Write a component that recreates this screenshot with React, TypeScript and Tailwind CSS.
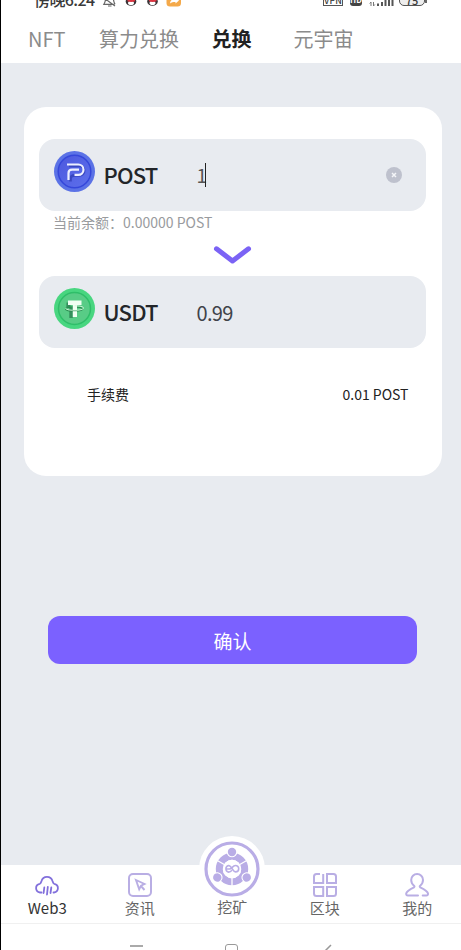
import React from "react";

function StatusBar() {
  return (
    <div className="flex h-[12px] shrink-0 items-start overflow-hidden bg-white text-[#3a3a3a]">
      <div className="ml-[33px] -mt-[11px] w-[67px] whitespace-nowrap text-[16px] font-medium leading-5 tracking-[-0.6px]">傍晚6:24</div>
      <svg className="h-[12px] w-[86px] shrink-0" viewBox="100 0 86 12" fill="none">
        <path d="M104.500 -1c0 2.200-.6 3.600-1.600 5.300h10.600M112.500 -1c0 2.200.5 3.600 1.500 5.300M107 6h3.500M103 -2l11 8" stroke="#666" strokeWidth="1.200" />
        {[130, 151.500].map((x) => (
          <g key={x}>
            <ellipse cx={x} cy="1.500" rx="5.300" ry="4.300" fill="#3a3437" />
            <ellipse cx={x} cy="3" rx="3" ry="2" fill="#fff" />
            <path d={`M${x - 3.500} -1h7.500v2.300q-4 1.200-7.500 0z`} fill="#dc3440" />
          </g>
        ))}
        <rect x="165.500" y="-8" width="14.500" height="14.500" rx="3.500" fill="#f4a94a" />
        <path d="M169 3.500c.5-3.500 2.500-4.500 5.500-4.500v-1.500l3.500 3-3.500 3v-1.500c-2.500 0-4 .3-5.500 1.500z" fill="#fff" />
      </svg>
      <div className="ml-[136px] -mt-[8px] h-[14px] w-[20px] border border-[#555] text-center text-[9px] font-medium leading-[15px]">VPN</div>
      <div className="ml-[7px] -mt-[7px] h-[13px] w-[12px] rounded-[3px] bg-[#444] text-center text-[8px] font-bold leading-[14px] text-white">HD</div>
      <svg className="ml-[7px] h-[8px] w-[26px] shrink-0" viewBox="0 0 26 8" fill="none">
        <path d="M2 2v4M0.700 3.500L2 2M4.500 2v4l1.300-1.500" stroke="#777" />
        <path d="M9 3.500v2.500M13 2v4M16.500 0v6M20 0v6M23.500 0v6" stroke="#555" strokeWidth="2" />
      </svg>
      <div className="ml-[4px] -mt-[8px] h-[14px] w-[26px] rounded-[5px] border-[1.500px] border-[#555] bg-[#eee] text-center text-[11px] font-medium leading-[14px]">75</div>
      <div className="h-[3px] w-[2px] bg-[#666]" />
    </div>
  );
}

function TopTabs() {
  return (
    <nav className="flex h-[51px] shrink-0 items-start whitespace-nowrap bg-white pt-[15px] text-[20px] leading-6 text-[#8b8b8b]">
      <span className="ml-[27px] w-[71px]">NFT</span>
      <span className="w-[112.500px]">算力兑换</span>
      <span className="w-[82px] font-bold text-[#222]">兑换</span>
      <span>元宇宙</span>
    </nav>
  );
}

function PostCoin() {
  return (
    <svg className="size-[41px]" viewBox="0 0 41 41" fill="none">
      <defs>
        <linearGradient id="postFace" x1="0" y1="0" x2="1" y2="1">
          <stop stopColor="#4c58de" />
          <stop offset="1" stopColor="#5d70ec" />
        </linearGradient>
      </defs>
      <circle cx="20.500" cy="20.500" r="20.500" fill="#5b72e6" />
      <circle cx="20.500" cy="20.500" r="16.300" fill="url(#postFace)" stroke="#3547da" strokeWidth="1.500" />
      <path d="M14 14H24.500a4.600 4.600 0 0 1 0 9.400H20q-4.500 0-4.500 3.600V29.500" stroke="#3947c0" strokeWidth="2.600" transform="translate(1 1)" />
      <path d="M13 13.500H24.300a5.200 5.200 0 0 1 0 10.400H20.500M25 18.700h-7q-3.500 0-3.500 3.500V29" stroke="#edf0ff" strokeWidth="2.200" />
    </svg>
  );
}

function UsdtCoin() {
  return (
    <svg className="size-[41px]" viewBox="0 0 41 41" fill="none">
      <circle cx="20.500" cy="20.500" r="20.500" fill="#48d680" />
      <circle cx="20.500" cy="20.500" r="16" fill="#58cc86" stroke="#2fbe69" strokeWidth="1.500" />
      <path d="M12.500 14.500h4v5h2.300V30h-3.500V20l-3-1z" fill="#348f5c" />
      <ellipse cx="20" cy="21" rx="8.500" ry="2.200" stroke="#2a8a50" strokeWidth="1.200" />
      <path d="M14 12.500h13.500v4.500h-4.500V29h-4.200V17H14z" fill="#f1fff3" />
      <path d="M11.500 20c0 1.400 4 2.300 9 2.300s9-.9 9-2.300-4-2.200-9-2.200" stroke="#d9f8df" strokeWidth=".9" />
      <path d="M18.500 22.800h4.800" stroke="#4ba872" strokeWidth=".8" />
    </svg>
  );
}

function CoinRow({ coin, name, children }: { coin: React.ReactNode; name: string; children: React.ReactNode }) {
  return (
    <div className="flex h-[72px] items-start rounded-[16px] bg-[#e8ebf0] pl-[15px] pr-[24px]">
      <div className="mt-[12px]">{coin}</div>
      <div className="ml-[8.500px] mt-[21px] w-[93px] text-[22px] font-medium leading-7 tracking-[-0.8px] text-[#222529]">{name}</div>
      {children}
    </div>
  );
}

function ExchangeCard() {
  return (
    <section className="ml-[22.500px] mt-[44px] h-[369px] w-[418px] rounded-[22px] bg-white px-[15.500px] pt-[32px]">
      <CoinRow coin={<PostCoin />} name="POST">
        <div className="mt-[24px] flex items-center text-[19px] leading-6 text-[#555]">
          <span className="w-[8.500px]">1</span>
          <span className="h-6 w-px bg-[#222]" />
        </div>
        <svg className="ml-auto mt-[28px] size-4" viewBox="0 0 16 16">
          <circle cx="8" cy="8" r="8" fill="#bec1cd" />
          <path d="M6 6l4 4M10 6l-4 4" stroke="#f4f5f8" strokeWidth="1.500" />
        </svg>
      </CoinRow>
      <p className="ml-[14px] mt-px text-[14px] leading-5 text-[#999b9e]">当前余额：0.00000 POST</p>
      <svg className="ml-[174px] mt-[13px] h-[20px] w-[40px]" viewBox="0 0 40 20" fill="none">
        <path d="M3.500 3.800L19.500 16L35.500 3.800" stroke="#7b63f5" strokeWidth="5" strokeLinecap="round" strokeLinejoin="round" />
      </svg>
      <div className="mt-[11px]">
        <CoinRow coin={<UsdtCoin />} name="USDT">
          <span className="mt-[25px] text-[20px] leading-6 tracking-[-0.7px] text-[#40434a]">0.99</span>
        </CoinRow>
      </div>
      <div className="mt-[36px] flex justify-between pl-[48px] pr-[17.500px] text-[14px] leading-5 text-[#222]">
        <span>手续费</span>
        <span>0.01 POST</span>
      </div>
    </section>
  );
}

function CloudIcon() {
  return (
    <svg className="h-[24px] w-[26px]" viewBox="0 0 26 24" fill="none" stroke="#8270dc" strokeWidth="1.800" strokeLinecap="round">
      <path d="M7.500 19.500H6a4.400 4.400 0 0 1-.3-8.700C7 10.500 7 9.500 7.500 8a5.700 5.700 0 0 1 11 0c.5 1.500.5 2.500 1.800 2.800a4.400 4.400 0 0 1-.3 8.700H19.500" />
      <path d="M10.300 14.500l-.7 5.500M13.800 14l-.8 7.500M17.300 14.500l-.8 5.500" />
    </svg>
  );
}

function CursorIcon() {
  return (
    <svg className="size-6" viewBox="0 0 24 24" fill="none" stroke="#b9aee4" strokeWidth="2">
      <rect x="1" y="1" width="22" height="22" rx="4" />
      <path d="M8 7l8.500 4-3.500 1.700-1.800 3.600zM13 13l3.500 4" strokeWidth="1.900" />
    </svg>
  );
}

function MiningIcon() {
  return (
    <svg className="h-[66px] w-[66px] shrink-0" viewBox="0 0 66 66" fill="none">
      <circle cx="33" cy="33" r="33" fill="#fff" />
      <circle cx="33" cy="33" r="26" stroke="#b9ade6" strokeWidth="3.200" />
      <circle cx="33" cy="33" r="12.700" stroke="#b9ade6" strokeWidth="7" />
      {[0, 120, 240].map((angle) => (
        <g key={angle} transform={`rotate(${angle} 33 33)`}>
          <path d="M33 42v8" stroke="#fff" strokeWidth="1.300" />
          <circle cx="33" cy="16" r="5.300" fill="#fff" />
          <circle cx="33" cy="16" r="4.200" fill="#b9ade6" />
        </g>
      ))}
      <circle cx="33" cy="33" r="9.200" fill="#fff" />
      <path d="M26.500 33H30.500c2.500 0 3-3.500 6-3.500a3.200 3.200 0 0 1 0 6.400c-3 0-3.500-6.400-7-6.400a3.400 3.400 0 0 0 0 6.600c1.500 0 2.500-.6 3.500-1.800" stroke="#b9ade6" strokeWidth="1.600" />
    </svg>
  );
}

function BlocksIcon() {
  return (
    <svg className="size-6" viewBox="0 0 24 24" fill="none" stroke="#b9aee4" strokeWidth="2">
      <path d="M7 1H3.500Q1 1 1 3.500V10H10.200V1M14 1h6.500q2.500 0 2.500 2.500V10H14zM1 14H10.200v9H3.500Q1 23 1 20.500zM14 14h9v6.500q0 2.500-2.500 2.500H14z" />
    </svg>
  );
}

function PersonIcon() {
  return (
    <svg className="size-6" viewBox="0 0 24 24" fill="none" stroke="#b9aee4" strokeWidth="2" strokeLinecap="round" strokeLinejoin="round">
      <path d="M13 22.500H3q-2.200 0-1.700-2.300C1.800 18 4.500 16.500 9 14.300q1-.6 0-1.600C7.300 11.300 6.200 9.500 6.200 7a5.900 5.900 0 0 1 11.800 0c0 2.500-1.100 4.300-2.800 5.700q-1 1 0 1.600c4.500 2.200 7.200 3.700 7.700 5.900q.5 2.300-1.700 2.300h-3.500" />
    </svg>
  );
}

function BottomTab({ icon, label, active = false }: { icon: React.ReactNode; label: string; active?: boolean }) {
  return (
    <div className="flex w-[92.500px] shrink-0 flex-col items-center pt-[8px]">
      <div className="flex h-6 items-end justify-center">{icon}</div>
      <span className={active ? "mt-px text-[15px] leading-5 text-[#333]" : "mt-px text-[15px] leading-5 text-[#666]"}>{label}</span>
    </div>
  );
}

export default function App() {
  return (
    <div className="flex h-[950px] w-[461px] flex-col overflow-hidden border-l border-black bg-white font-['Noto_Sans_CJK_SC',sans-serif]">
      <StatusBar />
      <TopTabs />
      <main className="h-[802px] shrink-0 bg-[#e8ebf0]">
        <ExchangeCard />
        <button className="ml-[47px] mt-[140px] block h-[48px] w-[369px] rounded-[12px] bg-[#7b61ff] pt-[2px] text-[19px] text-white">确认</button>
      </main>
      <footer className="flex h-[59px] shrink-0 border-b border-[#f0f0f0] bg-white">
        <BottomTab icon={<CloudIcon />} label="Web3" active />
        <BottomTab icon={<CursorIcon />} label="资讯" />
        <div className="-mt-[29px] flex w-[92.500px] shrink-0 flex-col items-center">
          <MiningIcon />
          <span className="-mt-[5px] text-[15px] leading-5 text-[#666]">挖矿</span>
        </div>
        <BottomTab icon={<BlocksIcon />} label="区块" />
        <BottomTab icon={<PersonIcon />} label="我的" />
      </footer>
      <div className="flex h-[26px] items-start bg-white pt-[20px]">
        <div className="ml-[129px] mt-px h-[2px] w-[13px] bg-[#aaa]" />
        <div className="ml-[82px] h-[14px] w-[13px] rounded-[3px] border-[1.500px] border-[#999]" />
        <svg className="ml-[86px] h-[14px] w-[8px]" viewBox="0 0 8 14" fill="none">
          <path d="M7 1L1 7l6 6" stroke="#999" strokeWidth="1.500" />
        </svg>
      </div>
    </div>
  );
}
